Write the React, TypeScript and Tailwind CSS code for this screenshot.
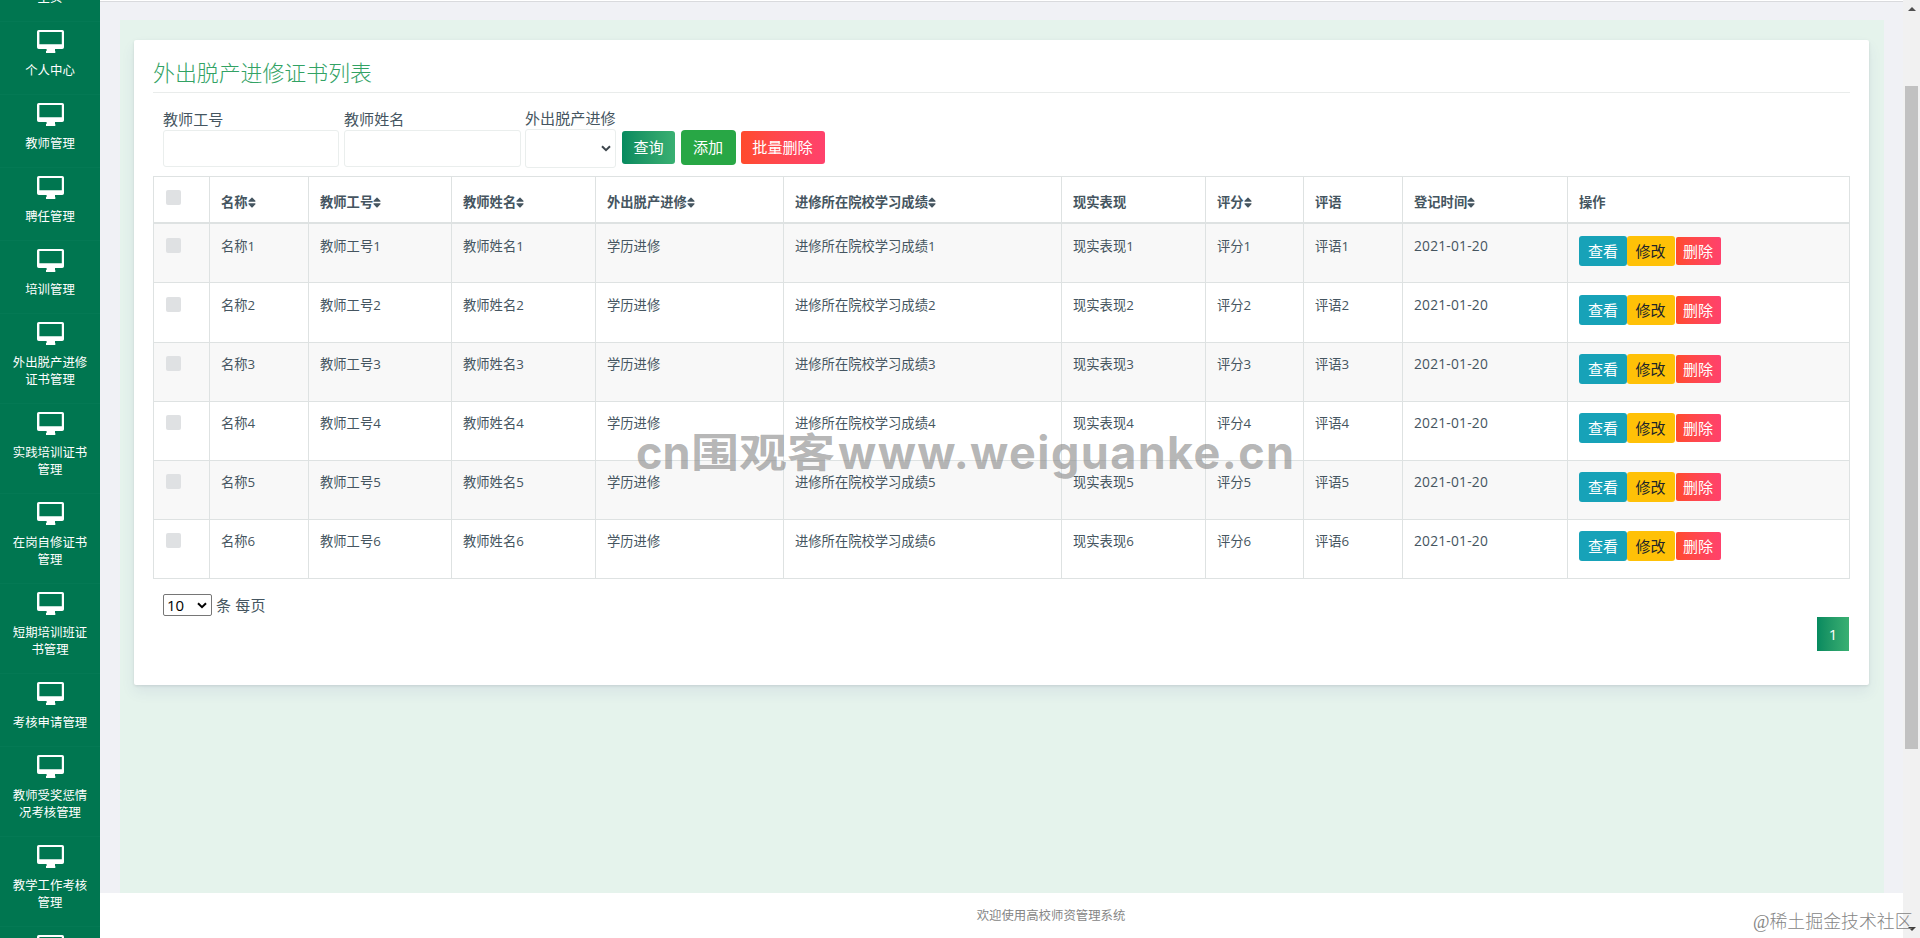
import { FaSort } from "react-icons/fa";

const menu: string[][] = [
  ["个人中心"],
  ["教师管理"],
  ["聘任管理"],
  ["培训管理"],
  ["外出脱产进修", "证书管理"],
  ["实践培训证书", "管理"],
  ["在岗自修证书", "管理"],
  ["短期培训班证", "书管理"],
  ["考核申请管理"],
  ["教师受奖惩情", "况考核管理"],
  ["教学工作考核", "管理"],
];

const headers: { label: string; sort?: boolean }[] = [
  { label: "名称", sort: true },
  { label: "教师工号", sort: true },
  { label: "教师姓名", sort: true },
  { label: "外出脱产进修", sort: true },
  { label: "进修所在院校学习成绩", sort: true },
  { label: "现实表现" },
  { label: "评分", sort: true },
  { label: "评语" },
  { label: "登记时间", sort: true },
  { label: "操作" },
];

const grid =
  "grid grid-cols-[56px_99px_143px_144px_188px_278px_144px_98px_99px_165px_282px]";
const cell = "border-r border-[#dee2e2] pl-[11px]";

function Monitor() {
  return (
    <svg className="block h-[23px] w-[27px] shrink-0" viewBox="0 0 27 23" fill="none">
      <path
        fillRule="evenodd"
        clipRule="evenodd"
        d="M1.8 0h23.4a1.8 1.8 0 0 1 1.8 1.8v15.4a1.8 1.8 0 0 1-1.8 1.8H18v2h.3v2H9v-2h.6v-2H1.8A1.8 1.8 0 0 1 0 17.2V1.8A1.8 1.8 0 0 1 1.8 0ZM2.4 2v12.3h22.4V2Z"
        fill="#fff"
      />
    </svg>
  );
}

function Chevron({ className }: { className: string }) {
  return (
    <svg className={className} viewBox="0 0 10 7" fill="none">
      <path d="M1 1.2l4 4 4-4" stroke="currentColor" strokeWidth="2" />
    </svg>
  );
}

function Sidebar() {
  return (
    <aside className="flex h-full w-[100px] shrink-0 flex-col overflow-hidden bg-[#007650] text-center text-[12.4px] leading-[17px] text-white">
      <div className="flex h-[21px] shrink-0 flex-col justify-end pb-[15px]">
        <div>主页</div>
      </div>
      {menu.map((lines) => (
        <div
          key={lines.join("")}
          className={`flex shrink-0 flex-col items-center border-t border-[#047954] pt-2 ${lines.length > 1 ? "h-[90px]" : "h-[73px]"}`}
        >
          <Monitor />
          <div className="mt-[9px]">
            {lines.map((l) => (
              <div key={l} className="whitespace-nowrap">
                {l}
              </div>
            ))}
          </div>
        </div>
      ))}
      <div className="flex shrink-0 flex-col items-center border-t border-[#047954] pt-2">
        <Monitor />
      </div>
    </aside>
  );
}

function Filters() {
  return (
    <div className="flex h-[83px] items-start pl-[10px] text-[15.1px] leading-[22px] text-[#455560]">
      <div className="mr-[5px] w-[176px] pt-[15px]">
        <div>教师工号</div>
        <div className="h-[37px] rounded-[3px] border border-[#eaeeed]" />
      </div>
      <div className="mr-1 w-[177px] pt-[15px]">
        <div>教师姓名</div>
        <div className="h-[37px] rounded-[3px] border border-[#eaeeed]" />
      </div>
      <div className="mr-[6px] w-[91px] pt-[14px]">
        <div>外出脱产进修</div>
        <div className="flex h-[39px] items-center justify-end rounded-[3px] border border-[#eaeeed] pr-1">
          <Chevron className="h-[7px] w-[10px] text-[#3d464d]" />
        </div>
      </div>
      <div className="flex items-center pt-[37px] text-white">
        <div className="mr-[6px] flex h-[33px] w-[53px] items-center justify-center rounded-[3px] bg-linear-to-r from-[#058a5f] to-[#39b072] pb-px">
          查询
        </div>
        <div className="mr-[5px] flex h-[35px] w-[55px] items-center justify-center rounded-[4px] bg-[#28a745] pr-px pb-px">
          添加
        </div>
        <div className="flex h-[33px] w-[84px] items-center justify-center rounded-[3px] bg-linear-to-r from-[#ff4b2b] to-[#ff416c] pr-px pb-px">
          批量删除
        </div>
      </div>
    </div>
  );
}

function Table() {
  return (
    <div className="w-[1697px] border-t border-l border-[#dee2e2] text-[13.3px] leading-[20px] text-[#455560]">
      <div className={`${grid} h-[47px] border-b-2 border-[#dee2e2] font-bold`}>
        <div className={`${cell} pt-[13px]`}>
          <div className="ml-px size-[15px] rounded-[2px] bg-[#dfe1e3]" />
        </div>
        {headers.map((h) => (
          <div key={h.label} className={`${cell} flex items-start pt-[15px]`}>
            <span className="whitespace-nowrap">{h.label}</span>
            {h.sort && <FaSort className="mt-[4px] h-[13px] w-[8px]" preserveAspectRatio="none" />}
          </div>
        ))}
      </div>
      {[1, 2, 3, 4, 5, 6].map((n) => {
        const pad = n < 3 ? "pt-[12px]" : "pt-[11px]";
        return (
          <div
            key={n}
            className={`${grid} border-b border-[#dee2e2] ${n === 2 ? "h-[60px]" : "h-[59px]"} ${n % 2 ? "bg-[#f8f8f8]" : "bg-white"}`}
          >
            <div className={`${cell} ${pad}`}>
              <div className="mt-[2px] ml-px size-[15px] rounded-[2px] bg-[#dfe1e3]" />
            </div>
            {[
              "名称" + n,
              "教师工号" + n,
              "教师姓名" + n,
              "学历进修",
              "进修所在院校学习成绩" + n,
              "现实表现" + n,
              "评分" + n,
              "评语" + n,
            ].map((t) => (
              <div key={t} className={`${cell} ${pad}`}>
                {t}
              </div>
            ))}
            <div className={`${cell} ${pad} text-[13.8px] tracking-[0.2px]`}>2021-01-20</div>
            <div className={`${cell} ${pad} flex items-start text-[15px] text-white`}>
              <div className="flex h-[30px] w-[48px] items-center justify-center rounded-[3px] bg-[#17a2b8]">
                查看
              </div>
              <div className="mr-px flex h-[30px] w-[48px] items-center justify-center rounded-[3px] bg-[#ffc107] pr-px text-[#212529]">
                修改
              </div>
              <div className="mt-px flex h-[28px] w-[45px] items-center justify-center rounded-[2px] bg-linear-to-r from-[#ff4b2b] to-[#ff416c] pr-px">
                删除
              </div>
            </div>
          </div>
        );
      })}
    </div>
  );
}

export default function App() {
  return (
    <div className="relative flex h-[938px] w-[1920px] overflow-hidden bg-[#f0f1f5] font-['Open_Sans','Noto_Sans_CJK_SC',sans-serif]">
      <Sidebar />
      <div className="flex w-[1803px] flex-col">
        <div className="h-[2px] shrink-0 border-b border-[#d9dadd] bg-white" />
        <main className="mt-[18px] ml-5 h-[873px] w-[1764px] bg-[#e5f3ec] pt-5 pl-[14px]">
          <section className="flex h-[645px] w-[1735px] flex-col rounded-[2px] bg-white pl-[19px] shadow-[0_7px_14px_rgba(69,65,150,0.08),0_1px_3px_rgba(0,0,0,0.1)]">
            <h1 className="h-[53px] w-[1697px] border-b border-[#e9eceb] pt-[17px] text-[21.9px] leading-[32px] font-light text-[#32a264]">
              外出脱产进修证书列表
            </h1>
            <Filters />
            <Table />
            <div className="mt-[15px] flex items-center pl-[10px] text-[15px] leading-[22px] text-[#455560]">
              <div className="flex h-[22px] w-[49px] items-center justify-between rounded-[2px] border border-[#767676] pr-1 pl-[3px] text-[15px] text-black">
                10
                <Chevron className="h-[7px] w-[10px]" />
              </div>
              <span className="ml-1 tracking-[0.2px]">条 每页</span>
            </div>
            <div className="mt-px ml-[1664px] flex h-[34px] w-8 items-center justify-center bg-linear-to-r from-[#058a5f] to-[#39b072] text-[15px] text-white">
              1
            </div>
          </section>
        </main>
        <footer className="flex h-[45px] items-center justify-center bg-white pt-px pl-[99px] text-[12.4px] text-[#868686]">
          欢迎使用高校师资管理系统
        </footer>
      </div>
      <div className="flex w-[17px] flex-col items-center bg-[#f1f1f1]">
        <svg className="mt-[7px] h-[4px] w-[8px]" viewBox="0 0 8 4">
          <path d="M0 4l4-4 4 4z" fill="#505050" />
        </svg>
        <div className="mt-[75px] h-[663px] w-[13px] bg-[#c1c1c1]" />
        <svg className="mt-[178px] h-[4px] w-[8px]" viewBox="0 0 8 4">
          <path d="M0 0h8l-4 4z" fill="#404040" />
        </svg>
      </div>
      <div className="pointer-events-none absolute top-[423px] left-[636px] flex h-[60px] items-center font-['Inter','Noto_Sans_CJK_SC',sans-serif] text-[45px] leading-[60px] font-bold whitespace-nowrap text-[#8c8c8c]/65">
        <span className="w-[55px]">cn</span>
        <span className="w-[147px] scale-y-[0.84] text-[48px] font-bold">围观客</span>
        <span className="tracking-[1.4px]">www.weiguanke.cn</span>
      </div>
      <div className="pointer-events-none absolute top-[909px] left-[1753px] font-['Liberation_Serif','Noto_Sans_CJK_SC',serif] text-[17.9px] leading-[26px] font-light whitespace-nowrap text-[#858585]">
        @稀土掘金技术社区
      </div>
    </div>
  );
}
